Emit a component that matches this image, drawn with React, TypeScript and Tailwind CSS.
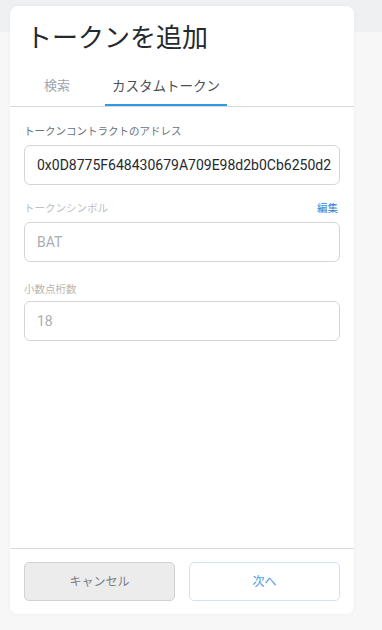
import { useState } from "react";

const font = { fontFamily: "Roboto, 'Noto Sans CJK JP', sans-serif" };

export default function App() {
  const [tab, setTab] = useState("custom");

  return (
    <div className="relative min-h-[630px] w-[382px] overflow-hidden bg-[#f7f7f7]" style={font}>
      <div className="absolute left-0 top-0 h-[32px] w-full bg-[#eef0f2]" />
      <div className="relative ml-[10px] mt-[6px] flex h-[608px] w-[344px] flex-col rounded-[8px] bg-white shadow-[0_0_4px_rgba(0,0,0,0.04)]">
        <h1 className="pl-[16px] pt-[12px] text-[26px] font-normal leading-[40px] text-[#24292e]">
          トークンを追加
        </h1>
        <div className="mt-[18px] flex border-b border-[#d6d9dc] pl-[18px]">
          <button
            onClick={() => setTab("search")}
            className={`px-[16px] pb-[8px] text-[13px] leading-[20px] ${
              tab === "search" ? "border-b-2 border-[#2f9ae0] text-[#535a61]" : "border-b-2 border-transparent text-[#9fa6ae]"
            }`}
          >
            検索
          </button>
          <button
            onClick={() => setTab("custom")}
            className={`ml-[19px] px-[7px] pb-[8px] text-[13.5px] leading-[20px] ${
              tab === "custom" ? "border-b-2 border-[#2f9ae0] text-[#4a5057]" : "border-b-2 border-transparent text-[#9fa6ae]"
            }`}
          >
            カスタムトークン
          </button>
        </div>

        <div className="flex flex-1 flex-col px-[14px] pt-[18px]">
          <label className="text-[10.5px] leading-[14px] text-[#6a737d]">
            トークンコントラクトのアドレス
          </label>
          <div className="mt-[6px] flex h-[40px] items-center rounded-[6px] border border-[#d2d6da] pl-[12px] text-[14px] text-[#24292e]">
            0x0D8775F648430679A709E98d2b0Cb6250d2
          </div>

          <div className="mt-[17px] flex items-center justify-between">
            <label className="text-[10.5px] leading-[14px] text-[#bbc0c5]">
              トークンシンボル
            </label>
            <span className="pr-[2px] text-[10.5px] leading-[14px] text-[#2f86d6]">編集</span>
          </div>
          <div className="mt-[6px] flex h-[40px] items-center rounded-[6px] border border-[#d2d6da] pl-[12px] text-[14px] text-[#a9aeb4]">
            BAT
          </div>

          <label className="mt-[21px] text-[10.5px] leading-[14px] text-[#b9b6ad]">
            小数点桁数
          </label>
          <div className="mt-[4px] flex h-[40px] items-center rounded-[6px] border border-[#d2d6da] pl-[12px] text-[14px] text-[#a9aeb4]">
            18
          </div>
        </div>

        <div className="flex gap-[14px] border-t border-[#d6d9dc] px-[14px] pb-[13px] pt-[13px]">
          <button className="flex h-[39px] flex-1 items-center justify-center rounded-[5px] border border-[#d2d2d2] bg-[#ececec] text-[12px] text-[#7a7f85]">
            キャンセル
          </button>
          <button className="flex h-[39px] flex-1 items-center justify-center rounded-[5px] border border-[#cfe3f7] bg-white text-[12px] text-[#4d9be6]">
            次へ
          </button>
        </div>
      </div>
    </div>
  );
}
